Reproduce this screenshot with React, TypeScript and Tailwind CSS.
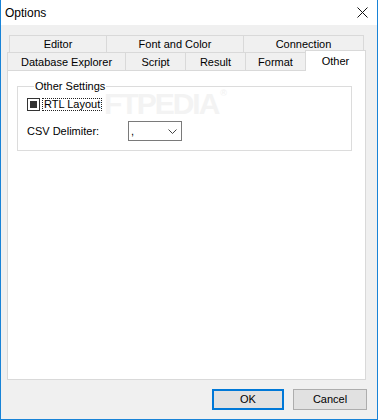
const font = { fontFamily: '"Liberation Sans", Arial, sans-serif' };

const topTabs = [
  { label: 'Editor', w: 'w-[98px]' },
  { label: 'Font and Color', w: 'w-[138px]' },
  { label: 'Connection', w: 'w-[121px]' },
];

const bottomTabs = [
  { label: 'Database Explorer', w: 'w-[119px]' },
  { label: 'Script', w: 'w-[61px]' },
  { label: 'Result', w: 'w-[61px]' },
  { label: 'Format', w: 'w-[61px]' },
];

function CloseIcon() {
  return (
    <svg width="11" height="11" viewBox="0 0 11 11" aria-hidden>
      <path d="M0.5 0.5 L10.5 10.5 M10.5 0.5 L0.5 10.5" stroke="#111" strokeWidth="1" fill="none" />
    </svg>
  );
}

function Chevron() {
  return (
    <svg width="9" height="5" viewBox="0 0 9 5" aria-hidden>
      <path d="M0.5 0.5 L4.5 4.5 L8.5 0.5" stroke="#444" strokeWidth="1" fill="none" />
    </svg>
  );
}

export default function App() {
  return (
    <div
      className="flex h-[420px] w-[378px] flex-col border-x border-b border-[#1883d7] bg-[#f0f0f0] text-[11px] text-black"
      style={font}
    >
      {/* title bar */}
      <div className="flex h-[25px] shrink-0 items-center justify-between bg-white pl-[4px] pr-[9px]">
        <span className="text-[12px] leading-none">Options</span>
        <CloseIcon />
      </div>

      {/* tab strip */}
      <div className="mt-[10px] flex flex-col">
        <div className="ml-[8px] flex h-[17px]">
          {topTabs.map((t, i) => (
            <div
              key={t.label}
              className={`${t.w} ${i > 0 ? '-ml-px' : ''} flex h-[17px] items-center justify-center border-x border-t border-[#d9d9d9] leading-none`}
            >
              {t.label}
            </div>
          ))}
        </div>
        <div className="ml-[6px] flex h-[18px] items-end">
          {bottomTabs.map((t, i) => (
            <div
              key={t.label}
              className={`${t.w} ${i > 0 ? '-ml-px' : ''} flex h-[18px] items-center justify-center border-x border-t border-[#d9d9d9] pt-[1px] leading-none`}
            >
              {t.label}
            </div>
          ))}
          <div className="relative z-10 -mb-px -ml-px flex h-[21px] w-[61px] items-center justify-center border-x border-t border-[#d9d9d9] bg-white leading-none">
            Other
          </div>
        </div>
      </div>

      {/* tab page */}
      <div className="relative ml-[6px] h-[310px] w-[359px] shrink-0 border border-[#d9d9d9] bg-white">
        <div
          className="pointer-events-none absolute left-[96px] top-[18px] select-none text-[30px] font-bold leading-none tracking-[-2px] text-[#f3f3f3]"
          aria-hidden
        >
          FTPEDIA<span className="ml-[2px] align-top text-[9px] tracking-normal">®</span>
        </div>
        <fieldset className="relative ml-[9px] mt-[9px] h-[71px] w-[335px] border border-[#dcdcdc] pl-[9px]">
          <legend className="ml-[7px] px-[1px] leading-[13px]">Other Settings</legend>
          <div className="mt-[5px] flex items-center">
            <span className="flex h-[13px] w-[13px] items-center justify-center border border-[#333]">
              <span className="h-[7px] w-[7px] bg-[#333]" />
            </span>
            <span className="ml-[2px] flex h-[13px] items-center border border-dotted border-[#222] px-[1px] leading-none">
              RTL Layout
            </span>
          </div>
          <div className="mt-[10px] flex items-center">
            <span className="w-[101px] leading-none">CSV Delimiter:</span>
            <div className="flex h-[20px] w-[54px] items-center justify-between border border-[#7a7a7a] bg-white pl-[2px] pr-[4px]">
              <span className="leading-none">,</span>
              <Chevron />
            </div>
          </div>
        </fieldset>
      </div>

      {/* buttons */}
      <div className="mr-[10px] mt-[9px] flex justify-end gap-[9px]">
        <button className="h-[21px] w-[72px] border-2 border-[#0078d7] bg-[#e1e1e1] leading-none">OK</button>
        <button className="h-[21px] w-[74px] border border-[#adadad] bg-[#e1e1e1] leading-none">Cancel</button>
      </div>
    </div>
  );
}
